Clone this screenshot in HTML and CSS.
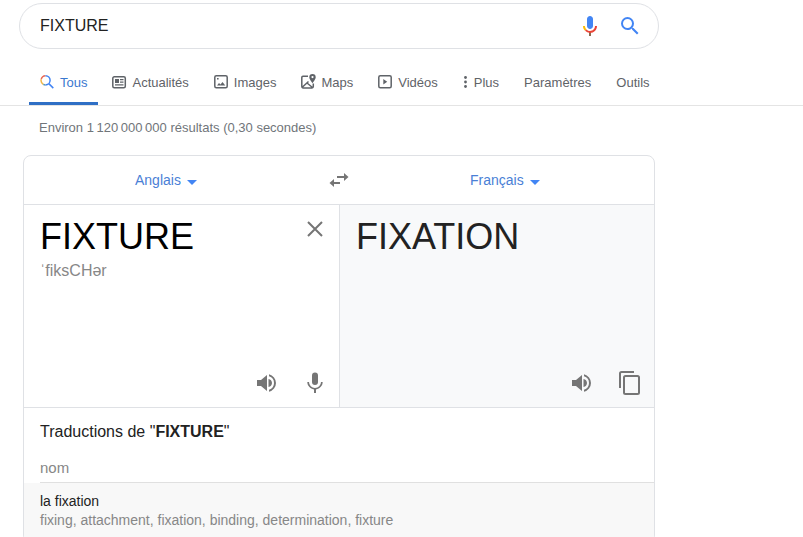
FILE: index.html
```html
<!DOCTYPE html>
<html lang="fr">
<head>
<meta charset="utf-8">
<meta name="viewport" content="width=device-width, initial-scale=1">
<title>FIXTURE</title>
<link rel="stylesheet" href="styles.css">
</head>
<body>
<header class="top">
  <form class="search" role="search">
    <input class="search-input" type="text" value="FIXTURE" aria-label="Rechercher">
    <button class="icon-button" type="button" aria-label="Recherche vocale">
      <svg width="24" height="24" viewBox="0 0 24 24"><path fill="#4285f4" d="M12 15c1.660 0 3-1.310 3-2.970V5.030C15 3.370 13.660 2 12 2S9 3.370 9 5.030v7C9 13.690 10.340 15 12 15z"/><path fill="#8a6a4f" d="M11 18.080h2V22h-2z"/><path fill="#fbbc05" d="M7.050 16.870C5.780 15.590 5 13.970 5 12h2c0 1.450.56 2.420 1.470 3.380z"/><path fill="#ea4335" d="M12 16.930a4.970 4.970 0 0 1-3.540-1.550l-1.410 1.490A6.890 6.890 0 0 0 12 19c3.870 0 6.990-2.920 6.990-7H17c0 2.920-2.240 4.930-5 4.930z"/></svg>
    </button>
    <button class="icon-button" type="submit" aria-label="Recherche Google">
      <svg width="24" height="24" viewBox="0 0 24 24" fill="#4285f4"><path d="M15.500 14h-.79l-.28-.27A6.470 6.470 0 0 0 16 9.500 6.500 6.500 0 1 0 9.500 16c1.610 0 3.090-.59 4.230-1.570l.27.28v.79l5 4.990L20.490 19zm-6 0a4.500 4.500 0 1 1 0-9 4.500 4.500 0 0 1 0 9z"/></svg>
    </button>
  </form>
  <nav class="tabs" aria-label="Filtres">
    <a class="tab active" href="#" aria-current="page">
      <svg width="16" height="16" viewBox="0 0 16 16" fill="none" stroke-width="1.500"><path stroke="#ea6a55" d="M1.200 5.300A4.600 4.600 0 0 1 5.500 1.700"/><path stroke="#f2b84a" d="M1.200 5.300A4.600 4.600 0 0 0 3.300 10.300"/><path stroke="#5b9bb0" d="M3.300 10.300A4.600 4.600 0 0 0 5.500 10.900"/><path stroke="#4285f4" d="M5.500 1.700a4.600 4.600 0 0 1 0 9.200M8.800 9.600 13.300 14.100"/></svg>
      Tous</a>
    <a class="tab" href="#">
      <svg width="16" height="16" viewBox="0 0 16 16"><rect x=".8" y="2.800" width="12.500" height="11" rx="1.500" fill="none" stroke="currentColor" stroke-width="1.500"/><path fill="currentColor" d="M3 5h4v4H3zM8 5h3.500v1.200H8zM8 7.500h3.500v1.200H8zM3 10.300h8.500v1.200H3z"/></svg>
      Actualités</a>
    <a class="tab" href="#">
      <svg width="16" height="16" viewBox="0 0 16 16"><rect x=".8" y="1.800" width="12.400" height="12" rx="1.500" fill="none" stroke="currentColor" stroke-width="1.500"/><path fill="currentColor" d="M3 11.500 5 9l1.500 1.600L8.500 8l2.800 3.500zM3 4h1.600v1.600H3z"/></svg>
      Images</a>
    <a class="tab" href="#">
      <svg width="16" height="16" viewBox="0 0 16 16"><path fill="none" stroke="currentColor" stroke-width="1.500" d="M7 2.300H2A1.300 1.300 0 0 0 .8 3.600v9A1.300 1.300 0 0 0 2 13.900h9a1.300 1.300 0 0 0 1.300-1.300V9.500M1.500 13 7.500 7.500M6 9l5.500 4.500"/><path fill="currentColor" fill-rule="evenodd" d="M11.500 0a3.200 3.200 0 0 0-3.200 3.200C8.300 5.400 11.500 9 11.500 9s3.200-3.600 3.200-5.800A3.200 3.200 0 0 0 11.500 0zm0 2a1.100 1.100 0 1 1 0 2.200 1.100 1.100 0 0 1 0-2.200z"/></svg>
      Maps</a>
    <a class="tab" href="#">
      <svg width="16" height="16" viewBox="0 0 16 16"><rect x=".8" y="1.800" width="12.400" height="12" rx="1.500" fill="none" stroke="currentColor" stroke-width="1.500"/><path fill="currentColor" d="M5.300 5v5.600L9.200 7.800z"/></svg>
      Vidéos</a>
    <a class="tab" href="#">
      <svg width="7" height="16" viewBox="0 0 7 16" fill="currentColor"><circle cx="2.500" cy="3.500" r="1.400"/><circle cx="2.500" cy="8" r="1.400"/><circle cx="2.500" cy="12.500" r="1.400"/></svg>
      Plus</a>
    <a class="tab" href="#">Paramètres</a>
    <a class="tab" href="#">Outils</a>
  </nav>
</header>
<main class="results">
  <p class="stats">Environ 1&thinsp;120&thinsp;000&thinsp;000 résultats (0,30 secondes)</p>
  <section class="card" aria-label="Traduction">
    <div class="languages">
      <div class="language">
        <select class="language-select" aria-label="Langue source"><option>Anglais</option></select>
        <svg width="10" height="5" viewBox="0 0 10 5" fill="#4285f4"><path d="M0 0h10L5 5z"/></svg>
      </div>
      <button class="swap" type="button" aria-label="Inverser les langues">
        <svg width="24" height="24" viewBox="0 0 24 24" fill="none" stroke="#757575" stroke-width="2"><path d="M10 9h8M13 15H6"/><path fill="#757575" stroke="none" d="M17 5l4.500 4-4.500 4zM7 11l-4.500 4L7 19z"/></svg>
      </button>
      <div class="language target">
        <select class="language-select" aria-label="Langue cible"><option>Français</option></select>
        <svg width="10" height="5" viewBox="0 0 10 5" fill="#4285f4"><path d="M0 0h10L5 5z"/></svg>
      </div>
    </div>
    <div class="panes">
      <div class="pane source-pane">
        <div class="pane-head">
          <div class="term">FIXTURE</div>
          <button class="icon-button clear" type="button" aria-label="Effacer">
            <svg width="24" height="24" viewBox="0 0 24 24"><path fill="none" stroke="#757575" stroke-width="2" d="M5 5l14 14M19 5 5 19"/></svg>
          </button>
        </div>
        <div class="phonetic">ˈfiksCHər</div>
        <div class="actions">
          <button class="icon-button" type="button" aria-label="Écouter">
            <svg width="24" height="24" viewBox="0 0 24 24" fill="#757575"><path d="M2 9v6h4l6 5V4L6 9zM17 12A4.500 4.500 0 0 0 13.500 7.970v8.050A4.500 4.500 0 0 0 17 12zM14 3.230v2.060a7 7 0 0 1 0 13.420v2.060a9 9 0 0 0 0-17.540z"/></svg>
          </button>
          <button class="icon-button" type="button" aria-label="Parler">
            <svg width="24" height="24" viewBox="0 0 24 24" fill="#757575"><path d="M12 14a3 3 0 0 0 3-3V4.500a3 3 0 0 0-6 0V11a3 3 0 0 0 3 3z"/><path d="M18 11a6 6 0 0 1-12 0H4.300c0 3.700 2.900 6.800 6.700 7.400V22h2v-3.600c3.800-.6 6.700-3.700 6.700-7.400z"/></svg>
          </button>
        </div>
      </div>
      <div class="pane target-pane">
        <div class="pane-head"><div class="term">FIXATION</div></div>
        <div class="actions">
          <button class="icon-button" type="button" aria-label="Écouter la traduction">
            <svg width="24" height="24" viewBox="0 0 24 24" fill="#757575"><path d="M2 9v6h4l6 5V4L6 9zM17 12A4.500 4.500 0 0 0 13.500 7.970v8.050A4.500 4.500 0 0 0 17 12zM14 3.230v2.060a7 7 0 0 1 0 13.420v2.060a9 9 0 0 0 0-17.540z"/></svg>
          </button>
          <button class="icon-button" type="button" aria-label="Copier">
            <svg width="24" height="24" viewBox="0 0 24 24" fill="none" stroke="#757575" stroke-width="2"><path d="M2 17V2.500A1.500 1.500 0 0 1 3.500 1H16"/><rect x="6" y="5" width="15" height="18" rx="1.500"/></svg>
          </button>
        </div>
      </div>
    </div>
    <h2 class="translations-title">Traductions de "<b>FIXTURE</b>"</h2>
    <h3 class="word-class">nom</h3>
    <div class="entry">
      <div class="entry-word">la fixation</div>
      <div class="entry-synonyms">fixing, attachment, fixation, binding, determination, fixture</div>
    </div>
  </section>
</main>
</body>
</html>
```
FILE: styles.css
```css
* {
  box-sizing: border-box;
}

body {
  margin: 0;
  background: #fff;
  color: #222;
  font-family: "Liberation Sans", Arial, sans-serif;
  font-size: 14px;
}

svg {
  display: block;
  flex: none;
}

button {
  border: 0;
  padding: 0;
  background: none;
  cursor: pointer;
}

.top {
  padding-top: 3px;
  border-bottom: 1px solid #e4e4e4;
}

.search {
  display: flex;
  align-items: center;
  gap: 16px;
  max-width: 640px;
  height: 46px;
  margin-left: 19px;
  padding: 0 16px 0 20px;
  border: 1px solid #dfe1e5;
  border-radius: 23px;
}

.search-input {
  flex: 1;
  min-width: 0;
  border: 0;
  padding: 0;
  outline: 0;
  background: none;
  color: #222;
  font: 16px "Liberation Sans", Arial, sans-serif;
}

.icon-button {
  flex: none;
}

.tabs {
  display: flex;
  gap: 3px;
  margin: 13px 0 0 29px;
}

.tab {
  display: flex;
  align-items: center;
  gap: 4px;
  height: 43px;
  padding: 0 11px;
  border-bottom: 3px solid transparent;
  color: #5f6368;
  font-size: 13px;
  text-decoration: none;
  white-space: nowrap;
}

.tab.active {
  border-color: #2f6fc5;
  color: #3b78cf;
}

.results {
  max-width: 655px;
  padding-left: 23px;
}

.stats {
  margin: 0;
  padding: 14px 16px 19px;
  color: #70757a;
  font-size: 13px;
  line-height: 16px;
}

.card {
  overflow: hidden;
  border: 1px solid #dfe1e5;
  border-radius: 8px;
}

.languages {
  display: grid;
  grid-template-columns: 1fr 62px 1fr;
  align-items: center;
  height: 49px;
  border-bottom: 1px solid #dfe1e5;
}

.language {
  display: flex;
  align-items: center;
  justify-content: center;
  gap: 6px;
}

.language.target {
  padding-right: 14px;
}

.language svg {
  margin-top: 4px;
}

.language-select {
  appearance: none;
  border: 0;
  padding: 0;
  background: none;
  color: #4a7fd6;
  font: 14px "Liberation Sans", Arial, sans-serif;
}

.swap {
  justify-self: center;
}

.panes {
  display: grid;
  grid-template-columns: 1fr 1fr;
  min-height: 203px;
  border-bottom: 1px solid #dfe1e5;
}

.pane {
  display: flex;
  flex-direction: column;
  padding: 10px 12px 12px 16px;
}

.target-pane {
  border-left: 1px solid #dfe1e5;
  background: #f8f9fa;
}

.pane-head {
  display: flex;
  align-items: flex-start;
  justify-content: space-between;
}

.term {
  font-size: 36px;
  line-height: 44px;
}

.source-pane .term {
  color: #000;
}

.clear {
  margin-top: 2px;
}

.phonetic {
  padding-top: 2px;
  color: #878787;
  font-size: 16px;
  line-height: 20px;
}

.actions {
  display: flex;
  align-items: center;
  justify-content: flex-end;
  gap: 24px;
  margin-top: auto;
}

.translations-title {
  margin: 0;
  padding: 14px 16px;
  font-size: 16px;
  font-weight: 400;
  line-height: 20px;
}

.word-class {
  margin: 0 0 0 16px;
  padding: 2px 0 4px;
  border-bottom: 1px solid #e0e0e0;
  color: #878787;
  font-size: 15px;
  font-weight: 400;
  line-height: 20px;
}

.entry {
  padding: 9px 16px 12px;
  background: #f8f8f8;
  line-height: 19px;
}

.entry-synonyms {
  color: #878787;
}
```
